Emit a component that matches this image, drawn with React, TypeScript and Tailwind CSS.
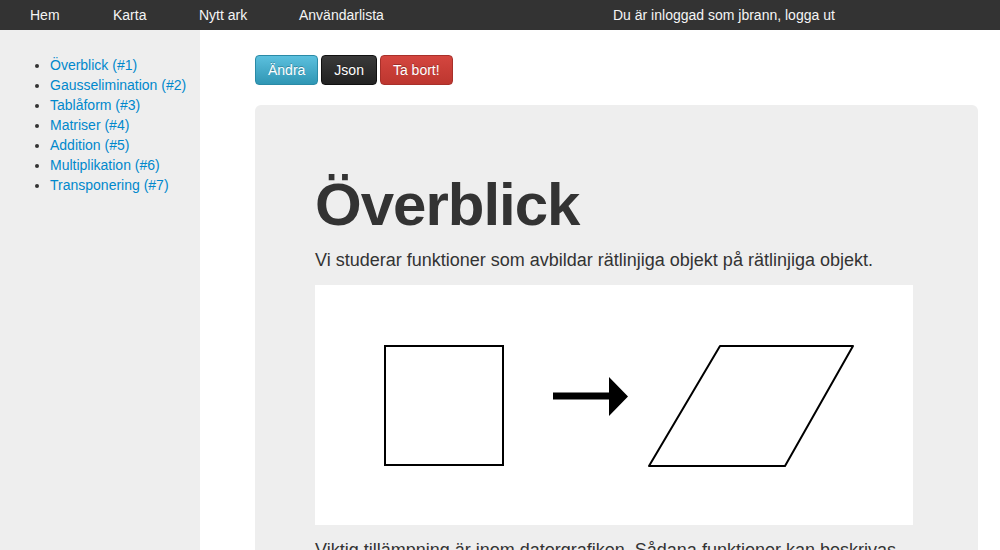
import React from 'react';

const chapters = [
  'Överblick (#1)',
  'Gausselimination (#2)',
  'Tablåform (#3)',
  'Matriser (#4)',
  'Addition (#5)',
  'Multiplikation (#6)',
  'Transponering (#7)',
];

const Figure: React.FC = () => (
  <svg width="598" height="240" viewBox="0 0 598 240" className="block">
    <rect x="70" y="61" width="118" height="119" fill="none" stroke="#000" strokeWidth="2" />
    <polygon points="238,107.5 294,107.5 294,92 313,111.5 294,131 294,114.5 238,114.5" fill="#000" />
    <polygon points="405,61 538,61 470,181 334,181" fill="none" stroke="#000" strokeWidth="2" strokeLinejoin="round" />
  </svg>
);

const App: React.FC = () => {
  return (
    <div className="w-[1000px] h-[550px] overflow-hidden bg-white text-[14px] leading-[20px] text-[#333] font-['Liberation_Sans',Arial,sans-serif]">
      <div className="h-[30px] bg-[#333333] text-[#f5f5f5] flex items-center pl-[30px]">
        <a className="w-[83px]">Hem</a>
        <a className="w-[86px]">Karta</a>
        <a className="w-[100px]">Nytt ark</a>
        <a className="w-[314px]">Användarlista</a>
        <span>Du är inloggad som jbrann, logga ut</span>
      </div>
      <div className="flex h-[520px]">
        <div className="w-[200px] shrink-0 bg-[#eeeeee] pt-[25px] pl-[25px]">
          <ul className="list-disc pl-[25px]">
            {chapters.map((c) => (
              <li key={c}>
                <a className="text-[#0088cc]">{c}</a>
              </li>
            ))}
          </ul>
        </div>
        <div className="pl-[55px] pt-[25px] w-[778px]">
          <div className="flex gap-[3px]">
            <button className="h-[30px] px-[12px] rounded-[4px] border border-[#2a8aa6] bg-gradient-to-b from-[#5bc0de] to-[#2f96b4] text-white [text-shadow:0_-1px_0_rgba(0,0,0,0.25)]">
              Ändra
            </button>
            <button className="h-[30px] px-[12px] rounded-[4px] border border-[#111] bg-gradient-to-b from-[#3a3a3a] to-[#222222] text-white [text-shadow:0_-1px_0_rgba(0,0,0,0.25)]">
              Json
            </button>
            <button className="h-[30px] px-[12px] rounded-[4px] border border-[#a8302a] bg-gradient-to-b from-[#d4463f] to-[#bd362f] text-white [text-shadow:0_-1px_0_rgba(0,0,0,0.25)]">
              Ta bort!
            </button>
          </div>
          <div className="mt-[20px] bg-[#eeeeee] rounded-[6px] px-[60px] pt-[60px] pb-[60px]">
            <h1 className="mt-[10px] mb-[10px] text-[60px] leading-[60px] font-bold tracking-[-1px] text-[#333]">Överblick</h1>
            <p className="text-[18px] leading-[30px] mb-[10px]">
              Vi studerar funktioner som avbildar rätlinjiga objekt på rätlinjiga objekt.
            </p>
            <div className="bg-white w-[598px] h-[240px] mb-[10px]">
              <Figure />
            </div>
            <p className="text-[18px] leading-[30px]">
              Viktig tillämpning är inom datorgrafiken. Sådana funktioner kan beskrivas med matriser.
            </p>
          </div>
        </div>
      </div>
    </div>
  );
};

export default App;
